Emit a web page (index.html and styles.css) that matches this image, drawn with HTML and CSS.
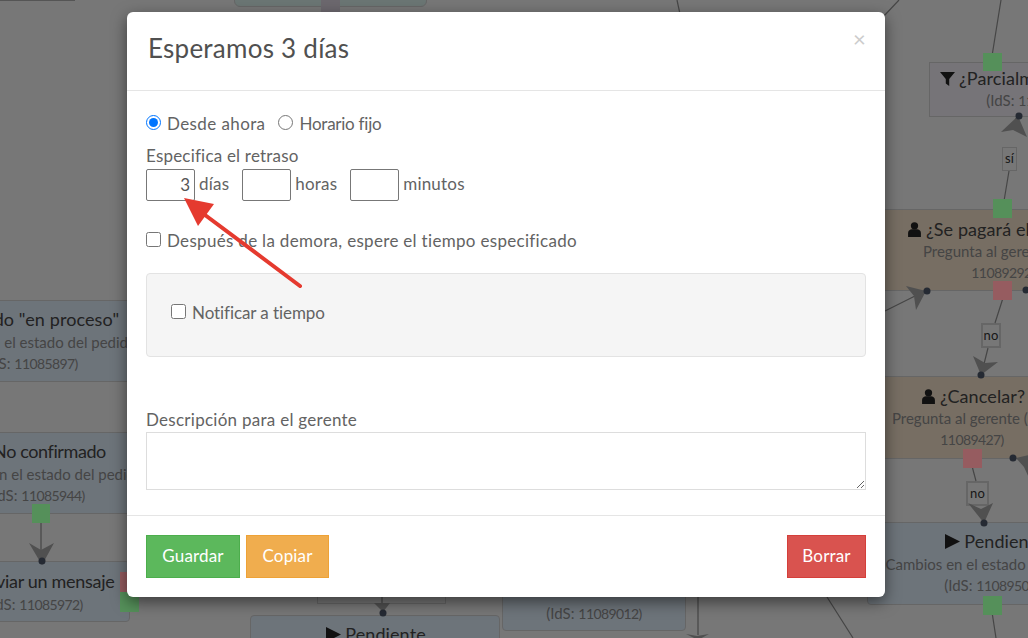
FILE: index.html
```html
<!DOCTYPE html>
<html lang="es">
<head>
<meta charset="utf-8">
<title>Esperamos 3 días</title>
<link rel="stylesheet" href="styles.css">
</head>
<body>
<div class="canvas">
  <div class="node n-top"></div>
  <div class="node filter n-parcial">
    <div class="ttl"><svg class="ico" viewBox="0 0 14 14"><path d="M0 1h14L8.6 7.4V14L5.4 11.6V7.4z"/></svg>¿Parcialmente pagado?</div>
    <div class="sub">(IdS: <span class="id">11089250)</span></div>
  </div>
  <div class="node ask n-pagara">
    <div class="ttl"><svg class="ico" viewBox="0 0 14 14"><circle cx="7" cy="3.6" r="3.4"/><path d="M1 14V10.2C1 8 3 6.8 4.6 6.8h4.8C11 6.8 13 8 13 10.2V14z"/></svg>¿Se pagará el pago?</div>
    <div class="sub">Pregunta al gerente (IdS:<br><span class="id">11089292)</span></div>
  </div>
  <div class="node ask n-cancelar">
    <div class="ttl"><svg class="ico" viewBox="0 0 14 14"><circle cx="7" cy="3.6" r="3.4"/><path d="M1 14V10.2C1 8 3 6.8 4.6 6.8h4.8C11 6.8 13 8 13 10.2V14z"/></svg>¿Cancelar?</div>
    <div class="sub">Pregunta al gerente (IdS:<br><span class="id">11089427)</span></div>
  </div>
  <div class="node state n-pend-r">
    <div class="ttl"><svg class="ico" viewBox="0 0 14 14"><path d="M0 0l14 7L0 14z"/></svg>Pendiente</div>
    <div class="sub">Cambios en el estado del pedido<br>(IdS: <span class="id">11089505)</span></div>
  </div>
  <div class="node state n-proceso">
    <div class="ttl"><svg class="ico" viewBox="0 0 14 14"><path d="M0 0l14 7L0 14z"/></svg>Estado "en proceso"</div>
    <div class="sub">Cambios en el estado del pedido<br>(IdS: <span class="id">11085897)</span></div>
  </div>
  <div class="node state n-noconf">
    <div class="ttl"><svg class="ico" viewBox="0 0 14 14"><path d="M0 0l14 7L0 14z"/></svg>No confirmado</div>
    <div class="sub">Cambios en el estado del pedido<br>(IdS: <span class="id">11085944)</span></div>
  </div>
  <div class="node state n-enviar">
    <div class="ttl"><svg class="ico" viewBox="0 0 14 14"><path d="M0 2h14v10H0z"/></svg>Enviar un mensaje</div>
    <div class="sub">(IdS: <span class="id">11085972)</span></div>
  </div>
  <div class="node plain n-mid"></div>
  <div class="node state n-pend-b">
    <div class="ttl"><svg class="ico" viewBox="0 0 14 14"><path d="M0 0l14 7L0 14z"/></svg>Pendiente</div>
  </div>
  <div class="node state n-012">
    <div class="sub">(IdS: <span class="id">11089012)</span></div>
  </div>
  <div class="tag tag-si">sí</div>
  <div class="tag tag-no1">no</div>
  <div class="tag tag-no2">no</div>
</div>

<div class="scrim"></div>

<svg class="links" viewBox="0 0 1028 638">
  <g class="wire">
    <path d="M677 0l3 14M899 0l-16 17M1001 0l-9 56M1016 118l-2 12M1009 171l-5 30M1003 298l-8 25M988 348l-6 24M972 466l4 15M992 612l4 26M41 518v36M827 597l26 41M885 311l30-15M382 597v16M698 597v38"/>
  </g>
  <g class="head">
    <path d="M1018 116L1001 132l12-2 14 7z"/>
    <path d="M926 291L906 286l8 10 2 14z"/>
    <path d="M981 375l-8-19 12 7 13-1z"/>
    <path d="M984 523l-16-20 13 6 12-6z"/>
    <path d="M1016 458l13-3v23l-5-11z"/>
    <path d="M42 565l-13-22 12 7 13-7z"/>
    <path d="M383 612l-9-9h16z"/>
    <path d="M698 640l-12-6 11 2 12-2z"/>
  </g>
  <g class="dot">
    <circle cx="1019" cy="116" r="3.5"/>
    <circle cx="927" cy="291" r="3.5"/>
    <circle cx="1026" cy="290" r="3.5"/>
    <circle cx="981" cy="375" r="3.5"/>
    <circle cx="1013" cy="458" r="3.5"/>
    <circle cx="984" cy="523" r="3.5"/>
    <circle cx="42" cy="561" r="3.5"/>
    <circle cx="383" cy="613" r="3.5"/>
  </g>
  <g class="sq-green">
    <rect x="983" y="53" width="19" height="18"/>
    <rect x="993" y="199" width="19" height="19"/>
    <rect x="983" y="596" width="19" height="19"/>
    <rect x="32" y="504" width="18" height="19"/>
    <rect x="120" y="592" width="19" height="20"/>
  </g>
  <g class="sq-red">
    <rect x="993" y="281" width="19" height="19"/>
    <rect x="963" y="449" width="19" height="19"/>
    <rect x="120" y="572" width="19" height="20"/>
  </g>
  <rect class="sq-gray" x="321" y="0" width="19" height="12"/>
  <rect class="sq-line" x="0" y="0" width="75" height="1"/>
</svg>

<div class="modal-wrap">
  <div class="modal">
    <header class="modal-head">
      <h4 class="modal-title">Esperamos 3 días</h4>
      <span class="close">×</span>
    </header>
    <div class="modal-body">
      <div class="radios">
        <label class="check now"><input type="radio" name="mode" checked> Desde ahora</label>
        <label class="check fixed"><input type="radio" name="mode"> Horario fijo</label>
      </div>
      <div class="field-label">Especifica el retraso</div>
      <div class="delay">
        <span class="unit"><input class="num" type="text" value="3"> <span class="unit-text">días</span></span>
        <span class="unit"><input class="num" type="text"> <span class="unit-text">horas</span></span>
        <span class="unit"><input class="num" type="text"> <span class="unit-text">minutos</span></span>
      </div>
      <label class="check after"><input type="checkbox"> Después de la demora, espere el tiempo especificado</label>
      <div class="well">
        <label class="check notify"><input type="checkbox"> Notificar a tiempo</label>
      </div>
      <div class="field-label desc-label">Descripción para el gerente</div>
      <textarea class="desc"></textarea>
    </div>
    <footer class="modal-foot">
      <button class="btn green">Guardar</button>
      <button class="btn orange">Copiar</button>
      <button class="btn red">Borrar</button>
    </footer>
    <svg class="pointer" viewBox="0 0 170 110">
      <path class="pointer-tail" d="M171 98L72 24"/>
      <path class="pointer-head" d="M55 10l30 6-16 22z"/>
    </svg>
  </div>
</div>
</body>
</html>
```
FILE: styles.css
```css
* { box-sizing: border-box; }
html, body { margin: 0; height: 100%; }
body {
  width: 1028px;
  height: 638px;
  overflow: hidden;
  position: relative;
  background: #eee;
  font-family: Lato, "Liberation Sans", sans-serif;
  font-size: 17px;
  letter-spacing: .15px;
  color: #636363;
}

/* diagram canvas */
.canvas { position: absolute; inset: 0; overflow: hidden; }
.scrim { position: absolute; inset: 0; background: rgba(0, 0, 0, .5); }
.links { position: absolute; inset: 0; width: 1028px; height: 638px; }
.wire path { fill: none; stroke: #464646; stroke-width: 1.2; }
.head path { fill: #505050; }
.dot circle { fill: #252a33; }
.sq-green rect { fill: #55905a; }
.sq-red rect { fill: #965c60; }
.sq-gray { fill: #6c686e; }
.sq-line { fill: #555; }

.node {
  position: absolute;
  text-align: center;
  white-space: nowrap;
  border: 1px solid #ccc;
  padding-top: 7px;
  color: #888;
}
.ttl { font-size: 18px; line-height: 24px; color: #444; letter-spacing: .1px; }
.sub { font-size: 15px; line-height: 21px; color: #8a8a8a; letter-spacing: 0; }
.id { font-size: 14px; letter-spacing: -.6px; }
.ico { width: 15px; height: 15px; fill: #222; margin-right: 4px; vertical-align: -1px; }
.state { background: #dbe8f5; border-radius: 4px; padding-top: 6px; }
.state .sub { margin-top: 1px; }
.ask { background: #efdcc6; }
.filter { background: #ece8f0; }
.plain { background: #eee; }

.n-top { left: 234px; top: -40px; width: 193px; height: 47px; background: #d6ece8; border-radius: 6px; }
.n-parcial { left: 929px; top: 62px; width: 210px; height: 55px; padding-top: 3px; }
.n-parcial .ttl { margin-left: 10px; }
.n-pagara { left: 878px; top: 209px; width: 250px; height: 82px; }
.n-pagara .ttl { margin-right: 18px; }
.n-cancelar { left: 847px; top: 376px; width: 250px; height: 83px; }
.n-cancelar .ttl { margin-left: 2px; }
.n-pend-r { left: 867px; top: 522px; width: 250px; height: 83px; }
.n-pend-r .ttl { margin-left: 6px; }
.n-proceso { left: -95px; top: 300px; width: 250px; height: 82px; }
.n-noconf { left: -88px; top: 432px; width: 250px; height: 82px; }
.n-noconf .ttl { letter-spacing: -.4px; margin-left: 6px; }
.n-enviar { left: -60px; top: 561px; width: 190px; height: 61px; padding-top: 7px; }
.n-enviar .ttl { letter-spacing: -.3px; margin-left: 2px; }
.n-mid { left: 317px; top: 560px; width: 129px; height: 44px; }
.n-pend-b { left: 250px; top: 615px; width: 250px; height: 60px; }
.n-pend-b .ttl { margin-left: 2px; }
.n-012 { left: 502px; top: 560px; width: 184px; height: 71px; padding-top: 41px; }

.tag {
  position: absolute;
  background: #eee;
  border: 2px solid #ccc;
  color: #333;
  font-size: 13px;
  line-height: 20px;
  text-align: center;
}
.tag-si { left: 1002px; top: 147px; width: 15px; height: 24px; border-width: 1px; }
.tag-no1 { left: 981px; top: 323px; width: 20px; height: 25px; }
.tag-no2 { left: 966px; top: 481px; width: 23px; height: 25px; }

/* modal */
.modal-wrap {
  position: absolute;
  inset: 0;
  padding: 12px 0 0 127px;
}
.modal {
  position: relative;
  width: 758px;
  height: 585px;
  background: #fff;
  border-radius: 6px;
  box-shadow: 0 5px 15px rgba(0, 0, 0, .5);
  display: flex;
  flex-direction: column;
}
.modal-head {
  height: 79px;
  flex: none;
  border-bottom: 1px solid #e5e5e5;
  padding: 19px 22px 0 21px;
  display: flex;
  justify-content: space-between;
}
.modal-title { margin: 0; font-size: 26px; line-height: 34px; font-weight: 400; color: #505050; letter-spacing: .25px; }
.close { color: #ccc; font-size: 22px; line-height: 16px; margin: 0 -3px 0 0; }

.modal-body { flex: 1; padding: 22px 19px 0; }
.check { display: inline-flex; align-items: center; gap: 6px; line-height: 22px; }
.check input { margin: 0 0 3px; width: 15px; height: 15px; flex: none; }
.now { letter-spacing: .4px; }
.fixed { letter-spacing: -.25px; }
.notify { letter-spacing: -.08px; }
.radios { display: flex; gap: 13px; height: 22px; }
.field-label { line-height: 22px; margin-top: 10px; letter-spacing: .2px; }
.delay { display: flex; gap: 13px; height: 32px; margin-top: 2px; }
.unit { display: flex; align-items: center; gap: 4px; letter-spacing: .2px; }
.unit-text { padding-bottom: 3px; }
.num {
  width: 49px;
  height: 32px;
  border: 1px solid #777;
  border-radius: 2px;
  padding: 0 4px 2px;
  text-align: right;
  font: inherit;
  color: #555;
  background: #fff;
}
.after { display: flex; margin-top: 29px; letter-spacing: .31px; }
.well {
  height: 84px;
  margin-top: 21px;
  background: #f5f5f5;
  border: 1px solid #e3e3e3;
  border-radius: 4px;
  padding: 28px 24px 0;
}
.desc-label { margin-top: 52px; letter-spacing: .27px; }
.desc {
  display: block;
  width: 720px;
  height: 58px;
  margin-top: 1px;
  border: 1px solid #ddd;
  background: #fff;
}

.modal-foot {
  height: 82px;
  flex: none;
  border-top: 1px solid #e5e5e5;
  padding: 19px 19px 0;
  display: flex;
  gap: 6px;
  align-items: flex-start;
}
.btn {
  height: 43px;
  border: 1px solid;
  color: #fff;
  font: inherit;
  letter-spacing: inherit;
  padding: 0 0 2px;
}
.green { width: 94px; background: #5cb85c; border-color: #4cae4c; }
.orange { width: 83px; background: #f0ad4e; border-color: #eea236; }
.red { width: 79px; margin-left: auto; background: #d9534f; border-color: #d43f3a; }

.pointer { position: absolute; left: 2px; top: 176px; width: 170px; height: 110px; overflow: visible; }
.pointer-tail { stroke: #e53a2f; stroke-width: 4; stroke-linecap: round; fill: none; }
.pointer-head { fill: #e53a2f; }
```
